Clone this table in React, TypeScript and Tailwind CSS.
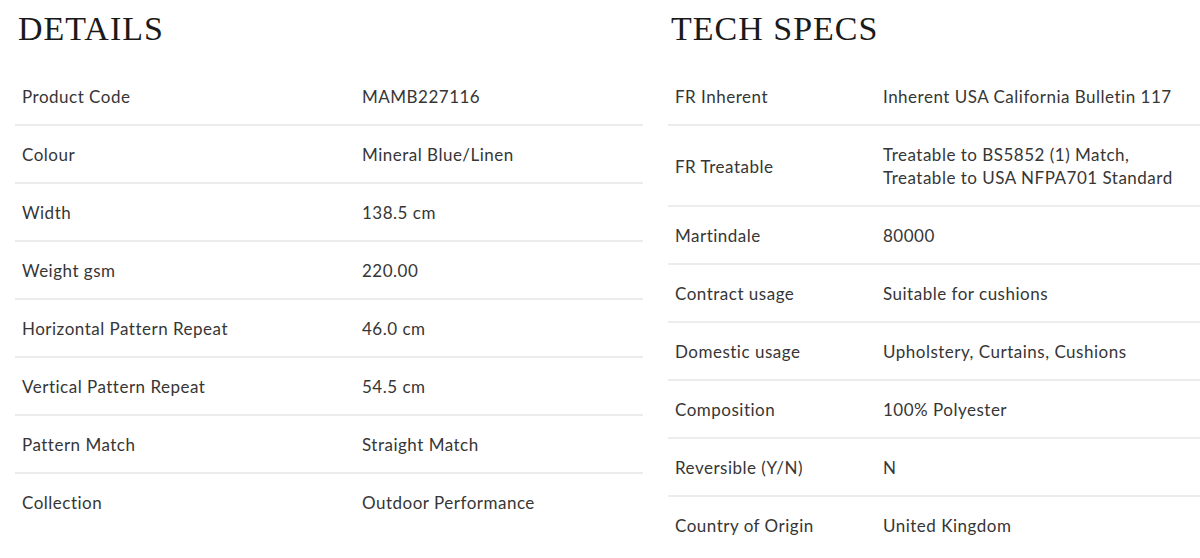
const details = [
  { label: "Product Code", value: "MAMB227116" },
  { label: "Colour", value: "Mineral Blue/Linen" },
  { label: "Width", value: "138.5 cm" },
  { label: "Weight gsm", value: "220.00" },
  { label: "Horizontal Pattern Repeat", value: "46.0 cm" },
  { label: "Vertical Pattern Repeat", value: "54.5 cm" },
  { label: "Pattern Match", value: "Straight Match" },
  { label: "Collection", value: "Outdoor Performance" },
];

const specs = [
  { label: "FR Inherent", value: ["Inherent USA California Bulletin 117"] },
  { label: "FR Treatable", value: ["Treatable to BS5852 (1) Match,", "Treatable to USA NFPA701 Standard"] },
  { label: "Martindale", value: ["80000"] },
  { label: "Contract usage", value: ["Suitable for cushions"] },
  { label: "Domestic usage", value: ["Upholstery, Curtains, Cushions"] },
  { label: "Composition", value: ["100% Polyester"] },
  { label: "Reversible (Y/N)", value: ["N"] },
  { label: "Country of Origin", value: ["United Kingdom"] },
];

const Heading = ({ children }: { children: string }) => (
  <h2 className="pt-[12px] pl-[3px] mb-[22px] text-[34px] leading-[34px] tracking-[1px] text-[#1a1a1a] font-['Liberation_Serif',serif] font-normal">
    {children}
  </h2>
);

export default function App() {
  return (
    <main className="w-[1200px] h-[558px] overflow-hidden bg-white font-['Lato',sans-serif] text-[17px] leading-[23px] tracking-[0.5px] text-[#363636]">
      <div className="flex gap-[25px] pl-[15px]">
        <section className="w-[628px] shrink-0">
          <Heading>DETAILS</Heading>
          <div className="flex flex-col">
            {details.map((row, i) => (
              <div
                key={row.label}
                className={`grid grid-cols-[347px_1fr] pt-[17px] pb-[16px] ${i > 0 ? "border-t-2 border-[#ececec]" : ""}`}
              >
                <span className="pl-[7px]">{row.label}</span>
                <span>{row.value}</span>
              </div>
            ))}
          </div>
        </section>
        <section className="flex-1">
          <Heading>TECH SPECS</Heading>
          <div className="flex flex-col">
            {specs.map((row, i) => (
              <div
                key={row.label}
                className={`grid grid-cols-[215px_1fr] items-center pt-[17px] pb-[16px] ${i > 0 ? "border-t-2 border-[#ececec]" : ""}`}
              >
                <span className="pl-[7px]">{row.label}</span>
                <div>
                  {row.value.map((v) => (
                    <div key={v}>{v}</div>
                  ))}
                </div>
              </div>
            ))}
          </div>
        </section>
      </div>
    </main>
  );
}
